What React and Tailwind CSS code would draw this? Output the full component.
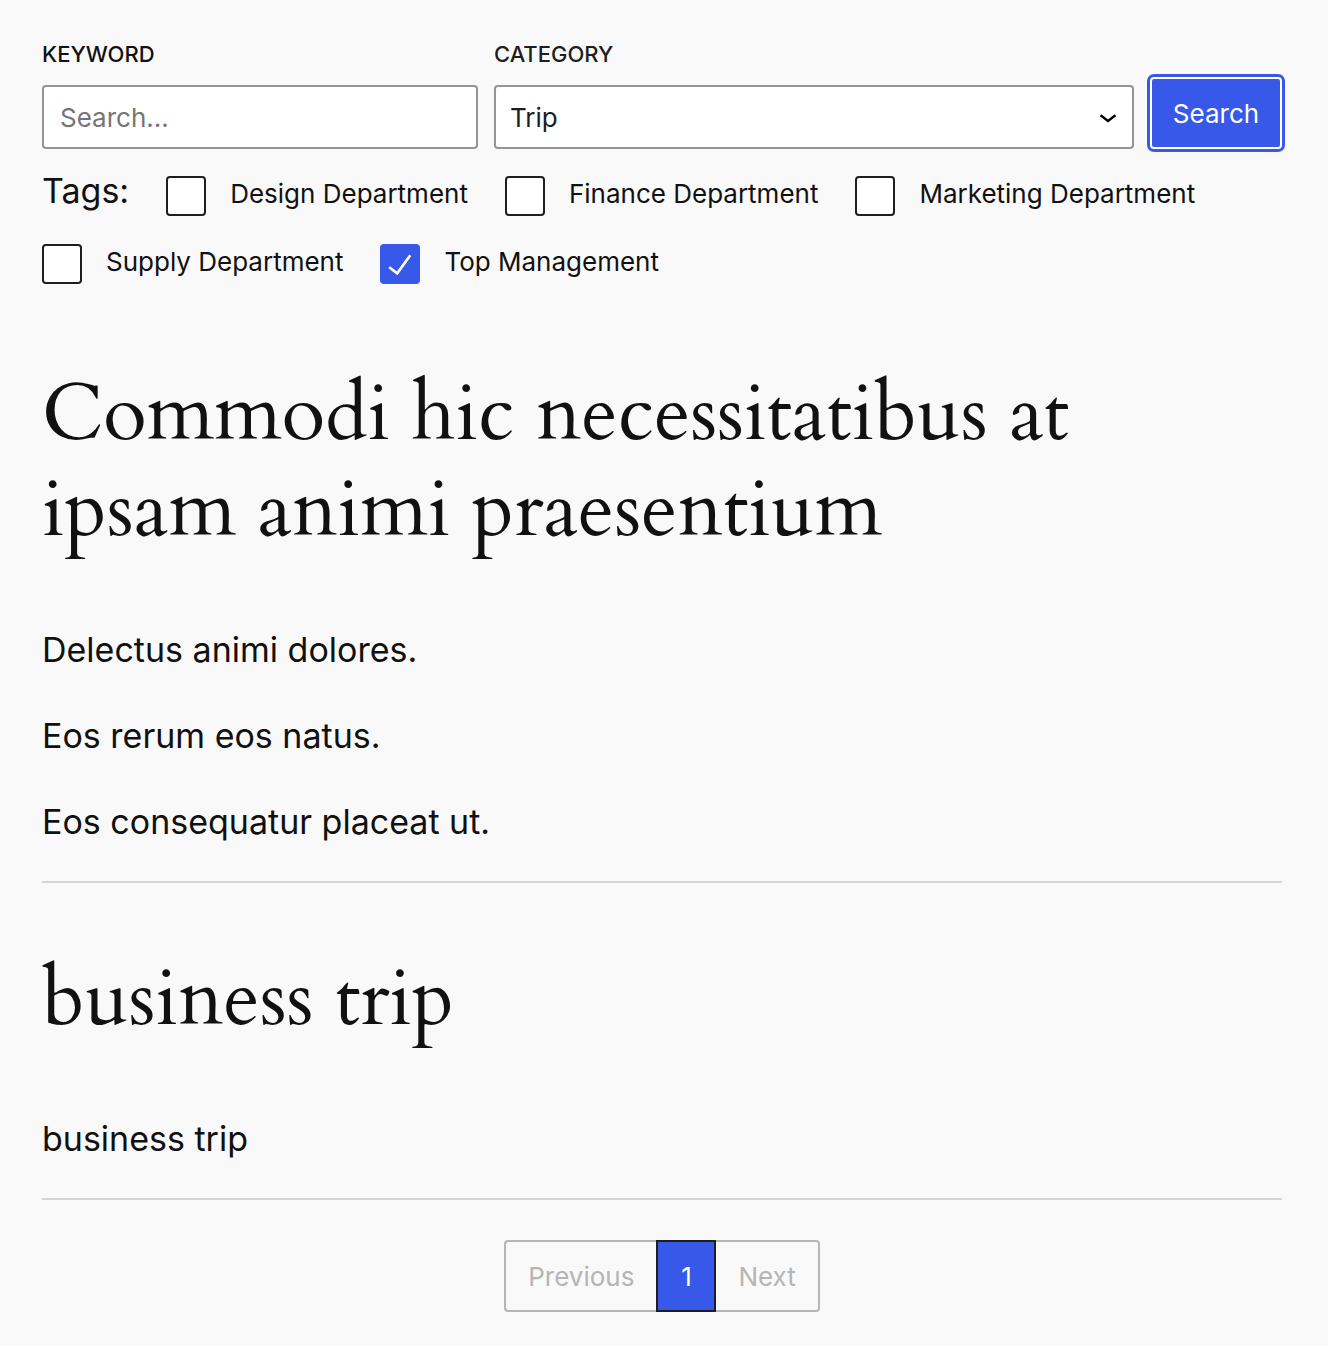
import React from "react";

const TAGS = [
  { label: "Design Department", checked: false },
  { label: "Finance Department", checked: false },
  { label: "Marketing Department", checked: false },
  { label: "Supply Department", checked: false },
  { label: "Top Management", checked: true },
];

const POSTS = [
  {
    title: "Commodi hic necessitatibus at ipsam animi praesentium",
    body: ["Delectus animi dolores.", "Eos rerum eos natus.", "Eos consequatur placeat ut."],
  },
  { title: "business trip", body: ["business trip"] },
];

function Tag({ label, checked }) {
  return (
    <label className="flex h-10 items-center gap-6 text-[26px] leading-9">
      <span className="grid size-10">
        <input
          type="checkbox"
          defaultChecked={checked}
          className="peer col-start-1 row-start-1 size-10 appearance-none rounded-[4px] border-2 border-[#1e1e1e] bg-white checked:border-[#3858e9] checked:bg-[#3858e9]"
        />
        <svg
          viewBox="0 0 40 40"
          className="pointer-events-none invisible col-start-1 row-start-1 size-10 peer-checked:visible"
          fill="none"
          stroke="white"
          strokeWidth="2.6"
        >
          <path d="M9.200 23.200 L17.200 29.300 L30.300 11.200" />
        </svg>
      </span>
      <span className="pb-1">{label}</span>
    </label>
  );
}

export default function App() {
  return (
    <main className="min-h-screen bg-[#f9f9f9] pt-9 pr-[46px] pb-8 pl-[42px] font-['Inter',sans-serif] text-[#111]">
      <form onSubmit={(e) => e.preventDefault()}>
        <div className="flex items-end gap-4">
          <div className="w-[436px] shrink-0">
            <label htmlFor="keyword" className="block h-[49px] text-[22px] leading-9 font-medium">
              KEYWORD
            </label>
            <input
              id="keyword"
              type="text"
              placeholder="Search..."
              className="block h-16 w-full rounded-[4px] border-2 border-[#949494] bg-white px-4 text-[26px] placeholder:text-[#757575]"
            />
          </div>
          <div className="min-w-0 flex-1">
            <label htmlFor="category" className="block h-[49px] text-[22px] leading-9 font-medium text-[#1e1e1e]">
              CATEGORY
            </label>
            <div className="grid items-center">
              <select
                id="category"
                className="col-start-1 row-start-1 block h-16 w-full appearance-none rounded-[4px] border-2 border-[#949494] bg-white px-[14px] text-[26px] text-[#1e1e1e]"
              >
                <option>Trip</option>
              </select>
              <svg
                viewBox="0 0 18 12"
                className="pointer-events-none col-start-1 row-start-1 mr-[17px] h-3 w-[18px] justify-self-end"
                fill="none"
                stroke="black"
                strokeWidth="2.500"
              >
                <path d="M1.500 4.300 L9 10 L16.500 4.300" />
              </svg>
            </div>
          </div>
          <button
            type="submit"
            className="h-[72px] w-[132px] rounded-[4px] border-2 border-white bg-[#3858e9] text-[26px] text-white ring-3 ring-[#3858e9]"
          >
            Search
          </button>
        </div>
        <fieldset className="mt-[27px] flex flex-wrap gap-x-[37px] gap-y-7">
          <span className="h-10 text-[34px] leading-[30px]">Tags:</span>
          {TAGS.map((tag) => (
            <Tag key={tag.label} {...tag} />
          ))}
        </fieldset>
      </form>

      <div className="pt-[14px]">
        {POSTS.map((post) => (
          <article key={post.title} className="border-b-2 border-[#d4d4d4] pt-[68px] pb-8">
            <h2 className="max-w-[1100px] font-['Cardo','EB_Garamond','Liberation_Serif',serif] text-[80px] leading-[96px]">
              {post.title}
            </h2>
            <div className="mt-[65px] flex flex-col gap-8 text-[34px] leading-[54px]">
              {post.body.map((line) => (
                <p key={line}>{line}</p>
              ))}
            </div>
          </article>
        ))}
      </div>

      <nav aria-label="Pagination" className="mt-10 flex justify-center text-[26px]">
        <button type="button" className="h-[72px] rounded-l-[4px] border-2 border-r-0 border-[#b5b5b5] px-[22px] text-[#b5b5b5]">
          Previous
        </button>
        <button type="button" aria-current="page" className="h-[72px] w-[60px] border-2 border-[#1e1e1e] bg-[#3858e9] text-white">
          1
        </button>
        <button type="button" className="h-[72px] rounded-r-[4px] border-2 border-l-0 border-[#b5b5b5] px-[22px] text-[#b5b5b5]">
          Next
        </button>
      </nav>
    </main>
  );
}
